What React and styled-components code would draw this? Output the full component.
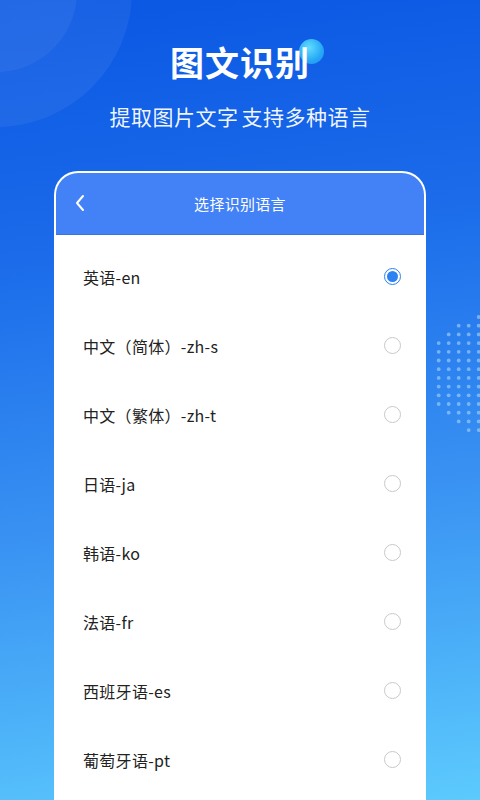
import React from "react";
import styled, { createGlobalStyle } from "styled-components";

const languages = [
  { label: "英语-en", selected: true },
  { label: "中文（简体）-zh-s" },
  { label: "中文（繁体）-zh-t" },
  { label: "日语-ja" },
  { label: "韩语-ko" },
  { label: "法语-fr" },
  { label: "西班牙语-es" },
  { label: "葡萄牙语-pt" },
];

function DotGrid() {
  const dots = [];
  for (let r = 0; r < 15; r++) {
    for (let c = 0; c < 6; c++) {
      const x = 5.7 + c * 10;
      const y = 7 + r * 8.7;
      const dx = x + 433 - 490;
      const dy = y + 310 - 376;
      if (Math.sqrt(dx * dx + dy * dy) < 61) {
        dots.push(<circle key={r + "-" + c} cx={x} cy={y} r="1.9" />);
      }
    }
  }
  return (
    <Dots width="60" height="140" viewBox="0 0 60 140">
      <g fill="#a8d6ff" fillOpacity="0.6">{dots}</g>
    </Dots>
  );
}

function Radio({ checked }) {
  return <RadioRing checked={checked}>{checked && <RadioDot />}</RadioRing>;
}

export default function App() {
  return (
    <>
      <GlobalStyle />
      <Page>
        <BigCircle />
        <SmallCircle />
        <DotGrid />
        <Hero>
          <TitleWrap>
            <TitleBubble />
            <Title>图文识别</Title>
          </TitleWrap>
          <Subtitle>提取图片文字 支持多种语言</Subtitle>
        </Hero>
        <Card>
          <Header>
            <Back>
              <svg width="12" height="18" viewBox="0 0 12 18">
                <path
                  d="M9 2 L3 9 L9 16"
                  fill="none"
                  stroke="#fff"
                  strokeWidth="2"
                  strokeLinecap="round"
                  strokeLinejoin="round"
                />
              </svg>
            </Back>
            <HeaderTitle>选择识别语言</HeaderTitle>
          </Header>
          <List>
            {languages.map((l) => (
              <Row key={l.label}>
                <Label>{l.label}</Label>
                <Radio checked={l.selected} />
              </Row>
            ))}
          </List>
        </Card>
      </Page>
    </>
  );
}

const GlobalStyle = createGlobalStyle`
  html, body {
    margin: 0;
    padding: 0;
  }
  body {
    font-family: "Noto Sans CJK SC", "Noto Sans", sans-serif;
  }
`;

const Page = styled.div`
  position: relative;
  width: 480px;
  height: 800px;
  overflow: hidden;
  background: linear-gradient(172deg, #0a57e3 0%, #1b6bea 30%, #3b95f3 65%, #5ccafd 100%);
  display: flex;
  flex-direction: column;
  align-items: center;
`;

const BigCircle = styled.div`
  position: absolute;
  left: -140px;
  top: -145px;
  width: 272px;
  height: 272px;
  border-radius: 50%;
  background: rgba(255, 255, 255, 0.06);
`;

const SmallCircle = styled.div`
  position: absolute;
  left: -85px;
  top: -88px;
  width: 162px;
  height: 160px;
  border-radius: 50%;
  background: rgba(255, 255, 255, 0.05);
`;

const Dots = styled.svg`
  position: absolute;
  left: 433px;
  top: 310px;
`;

const Hero = styled.div`
  position: relative;
  display: flex;
  flex-direction: column;
  align-items: center;
  padding-top: 40px;
`;

const TitleWrap = styled.div`
  position: relative;
`;

const TitleBubble = styled.div`
  position: absolute;
  right: -14px;
  top: -1px;
  width: 25px;
  height: 25px;
  border-radius: 50%;
  background: radial-gradient(circle at 40% 35%, #62dcff 0%, #27a8f6 60%, #1a8ff0 100%);
`;

const Title = styled.h1`
  position: relative;
  margin: 0;
  font-size: 34px;
  line-height: 44px;
  font-weight: 700;
  color: #fff;
  letter-spacing: 1px;
`;

const Subtitle = styled.p`
  margin: 18px 0 0;
  font-size: 21px;
  line-height: 28px;
  color: rgba(255, 255, 255, 0.95);
  letter-spacing: 0.5px;
  word-spacing: -2px;
`;

const Card = styled.div`
  position: relative;
  margin-top: 41px;
  width: 372px;
  flex: 1;
  border: 2px solid rgba(255, 255, 255, 0.9);
  border-bottom: none;
  border-radius: 24px 24px 0 0;
  overflow: hidden;
  background: #fff;
  box-sizing: border-box;
`;

const Header = styled.div`
  position: relative;
  height: 61px;
  background: #4281f6;
  display: flex;
  align-items: center;
  justify-content: center;
  border-bottom: 1px solid #3a73e0;
`;

const Back = styled.div`
  position: absolute;
  left: 18px;
  top: 21px;
  display: flex;
`;

const HeaderTitle = styled.div`
  color: #fff;
  font-size: 15px;
  letter-spacing: 0.3px;
`;

const List = styled.div`
  padding-top: 7px;
  display: flex;
  flex-direction: column;
`;

const Row = styled.div`
  height: 69px;
  display: flex;
  align-items: center;
  justify-content: space-between;
  padding: 0 23px 0 27px;
`;

const Label = styled.span`
  font-size: 16px;
  letter-spacing: 0.3px;
  color: #222;
`;

const RadioRing = styled.span`
  width: 17px;
  height: 17px;
  border-radius: 50%;
  box-sizing: border-box;
  border: 1.3px solid ${(p) => (p.checked ? "#2d7ff0" : "#c9c9c9")};
  display: flex;
  align-items: center;
  justify-content: center;
`;

const RadioDot = styled.span`
  width: 11px;
  height: 11px;
  border-radius: 50%;
  background: #2d82f2;
`;
